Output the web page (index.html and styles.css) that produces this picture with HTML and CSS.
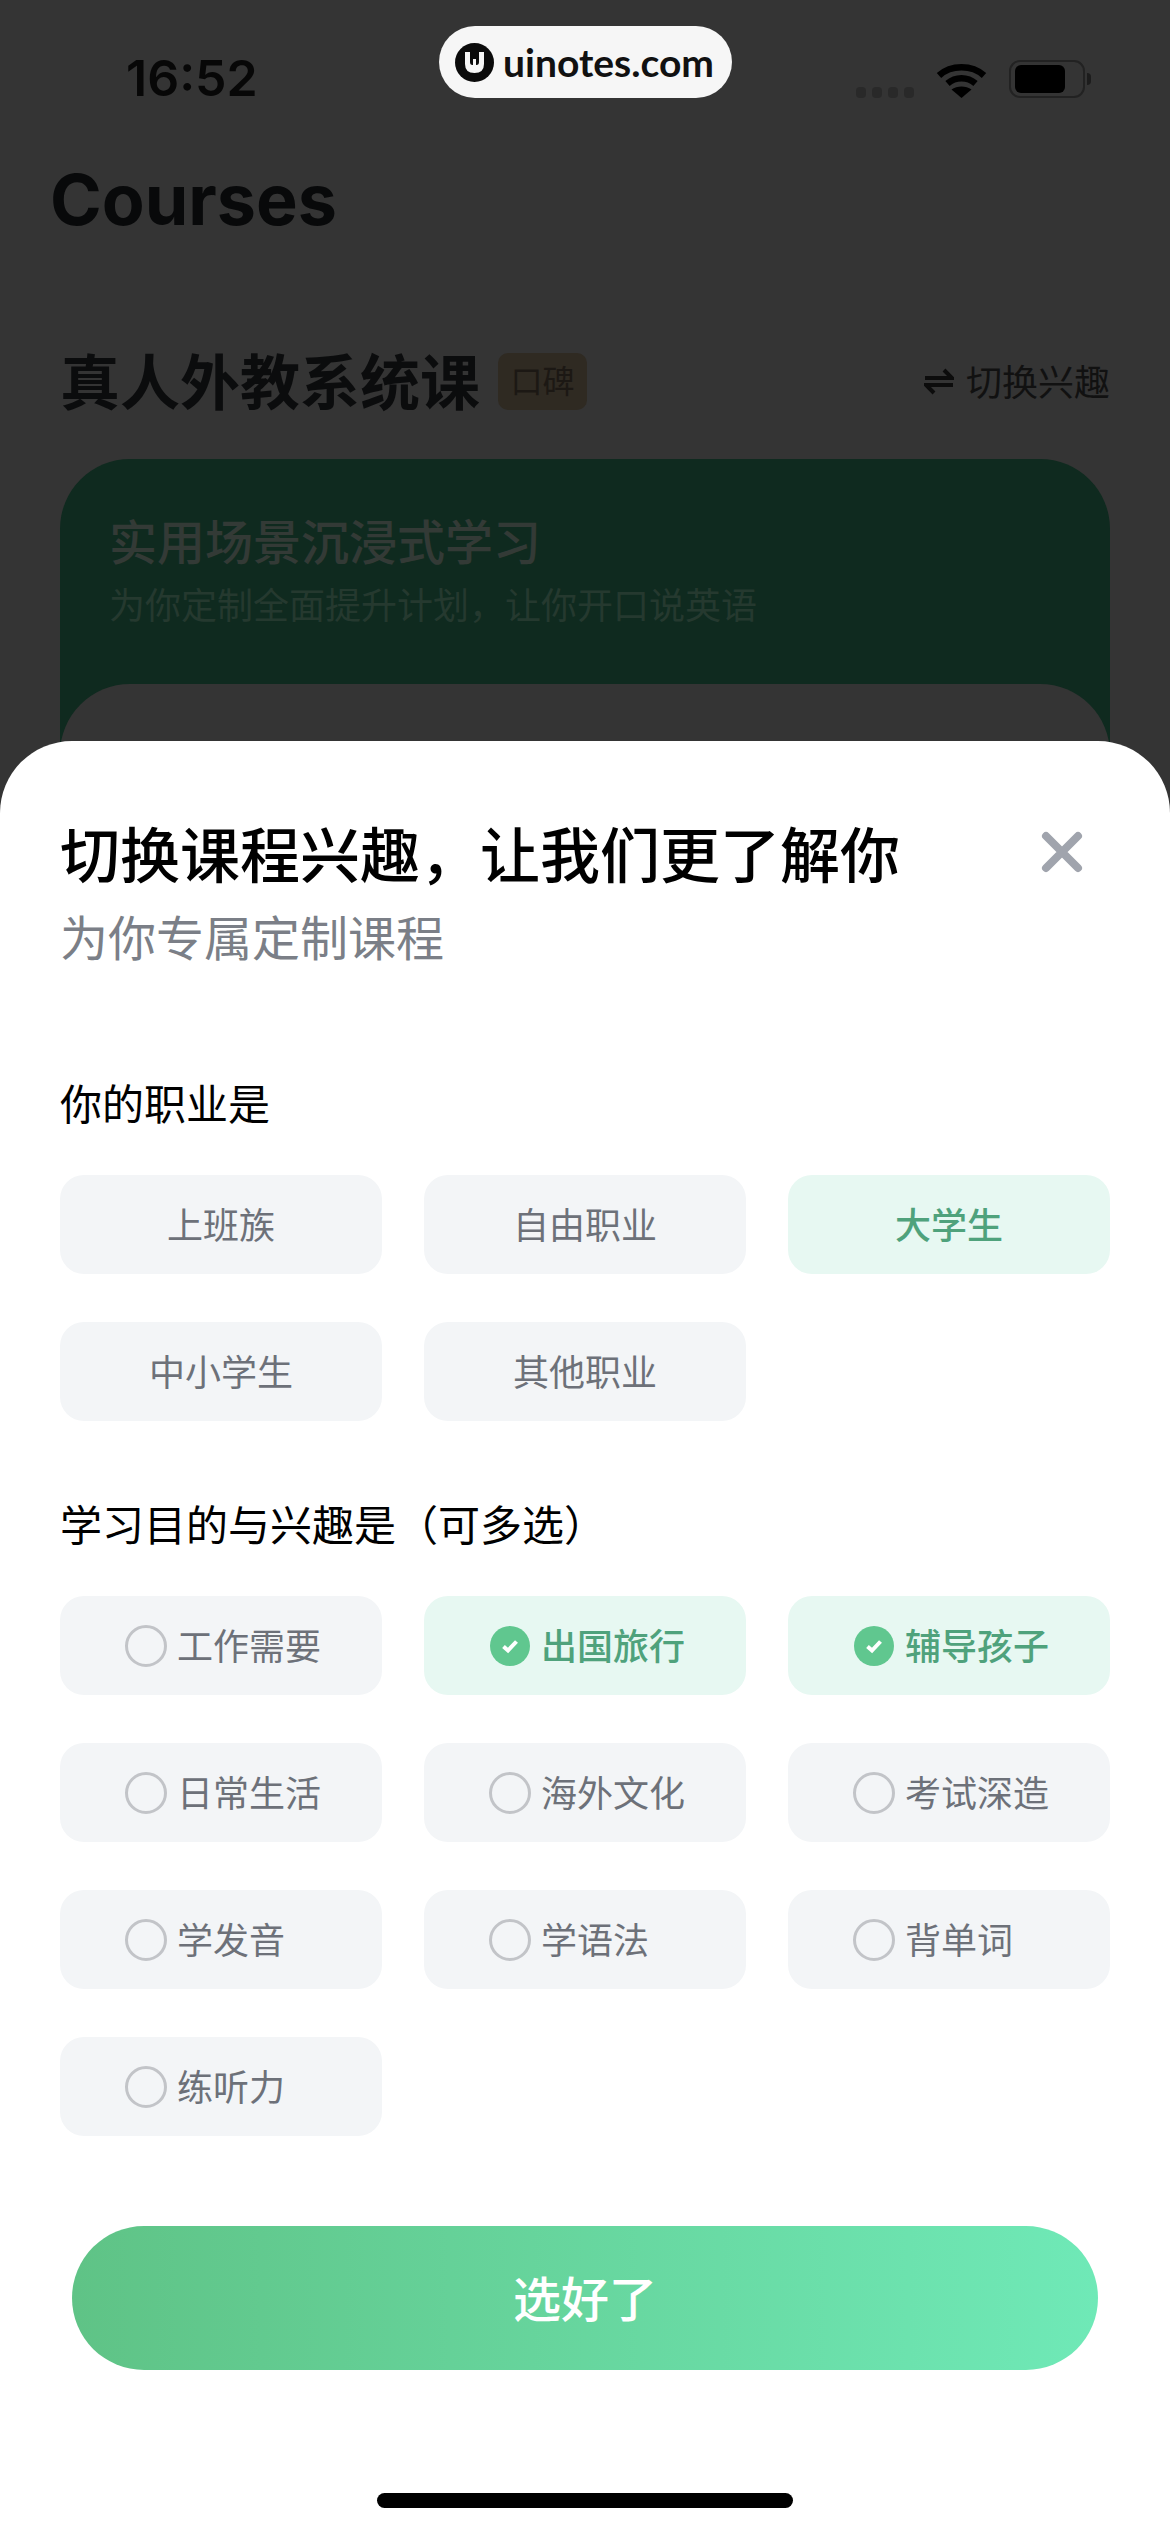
FILE: index.html
```html
<!DOCTYPE html>
<html lang="zh-CN">
<head>
  <meta charset="UTF-8" />
  <meta name="viewport" content="width=device-width, initial-scale=1.0"/>
  <title>Courses</title>
  <link rel="stylesheet" href="styles.css">
</head>
<body>
  <div class="screen">
    <!-- dimmed page behind the sheet -->
    <div class="page">
      <div class="status-bar">
        <span class="status-time">16:52</span>
        <div class="status-icons">
          <div class="signal-dots"><span></span><span></span><span></span><span></span></div>
          <svg class="wifi-icon" width="51" height="37" viewBox="0 0 51 37">
            <path d="M3 14.5C15 3.5 36 3.5 48 14.5" fill="none" stroke="#000" stroke-width="6.5"/>
            <path d="M11.500 22.500C19.500 15.500 31.500 15.500 39.500 22.500" fill="none" stroke="#000" stroke-width="6.5"/>
            <path d="M25.500 37L15.500 28.500C21 24.500 30 24.500 35.500 28.500Z" fill="#000"/>
          </svg>
          <div class="battery">
            <div class="battery-body"><div class="battery-level"></div></div>
            <div class="battery-nub"></div>
          </div>
        </div>
      </div>

      <h1 class="page-title">Courses</h1>

      <div class="section-head">
        <div class="section-left">
          <h2 class="section-title">真人外教系统课</h2>
          <span class="section-badge">口碑</span>
        </div>
        <div class="switch-link">
          <svg width="30" height="28" viewBox="0 0 30 28">
            <path d="M1 11H28L20 3M29 18H2L10 26" fill="none" stroke="#0c0c0c" stroke-width="4"/>
          </svg>
          <span>切换兴趣</span>
        </div>
      </div>

      <div class="course-card">
        <div class="course-card-head">
          <div class="course-card-title">实用场景沉浸式学习</div>
          <div class="course-card-sub">为你定制全面提升计划，让你开口说英语</div>
        </div>
        <div class="course-card-inner"></div>
      </div>
    </div>

    <div class="watermark">
      <svg width="39" height="39" viewBox="0 0 39 39">
        <circle cx="19.500" cy="19.500" r="19.500" fill="#0b0b0b"/>
        <path d="M10 9H15V19Q15 22 17.500 22H18V16H21V22H21.500Q24 22 24 19V9H29V21Q29 30 19.500 30Q10 30 10 21Z" fill="#f6f6f6"/>
      </svg>
      <span>uinotes.com</span>
    </div>

    <!-- bottom sheet -->
    <div class="sheet">
      <div class="sheet-head">
        <div>
          <div class="sheet-title">切换课程兴趣，让我们更了解你</div>
          <div class="sheet-sub">为你专属定制课程</div>
        </div>
        <svg class="sheet-close" width="42" height="42" viewBox="0 0 42 42">
          <path d="M5 5L37 37M37 5L5 37" fill="none" stroke="#a0a4ad" stroke-width="8" stroke-linecap="round"/>
        </svg>
      </div>

      <div class="group-label group-label-first">你的职业是</div>
      <div class="option-grid">
        <div class="option">上班族</div>
        <div class="option">自由职业</div>
        <div class="option option-on">大学生</div>
        <div class="option">中小学生</div>
        <div class="option">其他职业</div>
      </div>

      <div class="group-label">学习目的与兴趣是（可多选）</div>
      <div class="option-grid option-grid-multi">
        <div class="option"><span class="radio"></span>工作需要</div>
        <div class="option option-on"><svg class="check" width="40" height="40" viewBox="0 0 40 40"><circle cx="20" cy="20" r="20" fill="#60c78f"/><path d="M13.500 20.500L18 24.500L26.500 15.500" fill="none" stroke="#fff" stroke-width="4"/></svg>出国旅行</div>
        <div class="option option-on"><svg class="check" width="40" height="40" viewBox="0 0 40 40"><circle cx="20" cy="20" r="20" fill="#60c78f"/><path d="M13.500 20.500L18 24.500L26.500 15.500" fill="none" stroke="#fff" stroke-width="4"/></svg>辅导孩子</div>
        <div class="option"><span class="radio"></span>日常生活</div>
        <div class="option"><span class="radio"></span>海外文化</div>
        <div class="option"><span class="radio"></span>考试深造</div>
        <div class="option"><span class="radio"></span>学发音</div>
        <div class="option"><span class="radio"></span>学语法</div>
        <div class="option"><span class="radio"></span>背单词</div>
        <div class="option"><span class="radio"></span>练听力</div>
      </div>

      <div class="confirm-btn">选好了</div>
      <div class="home-bar"></div>
    </div>
  </div>
</body>
</html>
```

FILE: styles.css
```css
html, body {
  margin: 0;
  padding: 0;
}

body {
  font-family: "Noto Sans CJK SC", "Noto Sans", sans-serif;
  background: #333;
}

.screen {
  position: relative;
  width: 1170px;
  height: 2532px;
  overflow: hidden;
  background: #343434;
}

.page {
  padding: 0 60px;
}

.status-bar {
  display: flex;
  justify-content: space-between;
  align-items: center;
  height: 54px;
  padding: 50px 0 0 66px;
}

.status-time {
  margin-top: 2px;
  font-family: Inter, sans-serif;
  font-size: 50px;
  font-weight: 600;
  line-height: 54px;
  color: #070707;
}

.status-icons {
  display: flex;
  align-items: flex-end;
  margin-right: 19px;
  margin-top: 4px;
}

.signal-dots {
  display: flex;
  gap: 6px;
  margin-right: 22px;
}

.signal-dots span {
  width: 10px;
  height: 11px;
  border-radius: 4px;
  background: #292929;
}

.wifi-icon {
  display: block;
  margin-right: 22px;
}

.battery {
  display: flex;
  align-items: center;
}

.battery-body {
  box-sizing: border-box;
  width: 76px;
  height: 38px;
  padding: 3px 4px;
  border: 2px solid #222;
  border-radius: 11px;
}

.battery-level {
  width: 50px;
  height: 28px;
  border-radius: 6px;
  background: #000;
}

.battery-nub {
  width: 4px;
  height: 12px;
  margin-left: 2px;
  border-radius: 0 6px 6px 0;
  background: #1c1c1c;
}

.page-title {
  margin: 51px 0 0 -10px;
  font-family: Inter, sans-serif;
  font-size: 70px;
  font-weight: 700;
  line-height: 90px;
  color: #08090a;
}

.section-head {
  display: flex;
  justify-content: space-between;
  align-items: center;
  height: 58px;
  margin-top: 107px;
}

.section-left {
  display: flex;
  align-items: center;
  gap: 18px;
}

.section-title {
  margin: -5px 0 0;
  font-size: 60px;
  font-weight: 700;
  line-height: 58px;
  color: #0b0c0d;
}

.section-badge {
  display: flex;
  align-items: center;
  justify-content: center;
  width: 89px;
  height: 57px;
  padding-bottom: 4px;
  box-sizing: border-box;
  border-radius: 10px;
  background: #2f2a22;
  font-size: 32px;
  color: #1c1814;
}

.switch-link {
  display: flex;
  align-items: center;
  gap: 12px;
  font-size: 36px;
  color: #111;
}

.switch-link span {
  margin-top: -3px;
}

.course-card {
  margin-top: 49px;
  height: 500px;
  border-radius: 70px 70px 0 0;
  background: #0f2a1f;
}

.course-card-head {
  padding: 50px 50px 56px 49px;
}

.course-card-title {
  font-size: 48px;
  font-weight: 500;
  line-height: 60px;
  color: #333a36;
}

.course-card-sub {
  margin-top: 9px;
  font-size: 36px;
  line-height: 50px;
  color: #25392f;
}

.course-card-inner {
  height: 300px;
  border-radius: 70px 70px 0 0;
  background: #343434;
}

.watermark {
  position: absolute;
  top: 26px;
  left: 439px;
  display: flex;
  align-items: center;
  gap: 9px;
  box-sizing: border-box;
  width: 293px;
  height: 72px;
  padding-left: 16px;
  border-radius: 36px;
  background: #f6f6f6;
  font-family: Lato, sans-serif;
  font-size: 39px;
  font-weight: 700;
  color: #111;
}

.watermark svg {
  display: block;
}

.sheet {
  position: absolute;
  left: 0;
  right: 0;
  top: 741px;
  bottom: 0;
  box-sizing: border-box;
  padding: 71px 60px 24px;
  border-radius: 72px 72px 0 0;
  background: #fff;
}

.sheet-head {
  display: flex;
  justify-content: space-between;
  align-items: flex-start;
}

.sheet-title {
  font-size: 60px;
  font-weight: 500;
  line-height: 80px;
  color: #000;
}

.sheet-sub {
  margin-top: 13px;
  font-size: 48px;
  line-height: 60px;
  color: #7b7f87;
}

.sheet-close {
  display: block;
  margin: 19px 27px 0 0;
}

.group-label {
  margin: 72px 0 43px;
  font-size: 42px;
  line-height: 60px;
  color: #000;
}

.group-label-first {
  margin-top: 107px;
}

.option-grid {
  display: grid;
  grid-template-columns: repeat(3, 322px);
  grid-auto-rows: 99px;
  gap: 48px 42px;
}

.option {
  display: flex;
  align-items: center;
  justify-content: center;
  gap: 10px;
  box-sizing: border-box;
  padding-bottom: 3px;
  border-radius: 24px;
  background: #f3f5f7;
  font-size: 36px;
  color: #6d7179;
}

.option-grid-multi .option {
  justify-content: flex-start;
  padding-left: 65px;
}

.option-on {
  background: #e7f8f2;
  font-weight: 500;
  color: #4fa27c;
}

.radio {
  box-sizing: border-box;
  width: 42px;
  height: 42px;
  margin-top: 3px;
  border: 3px solid #c2c4c8;
  border-radius: 50%;
}

.check {
  display: block;
  margin: 3px 1px 0 1px;
}

.confirm-btn {
  display: flex;
  align-items: center;
  justify-content: center;
  box-sizing: border-box;
  height: 144px;
  margin: 90px 12px 0;
  padding-bottom: 4px;
  border-radius: 72px;
  background: linear-gradient(90deg, #5fc386, #6fe9b7);
  font-size: 48px;
  font-weight: 500;
  color: #fff;
}

.home-bar {
  width: 416px;
  height: 15px;
  margin: 123px auto 0;
  border-radius: 8px;
  background: #000;
}
```
